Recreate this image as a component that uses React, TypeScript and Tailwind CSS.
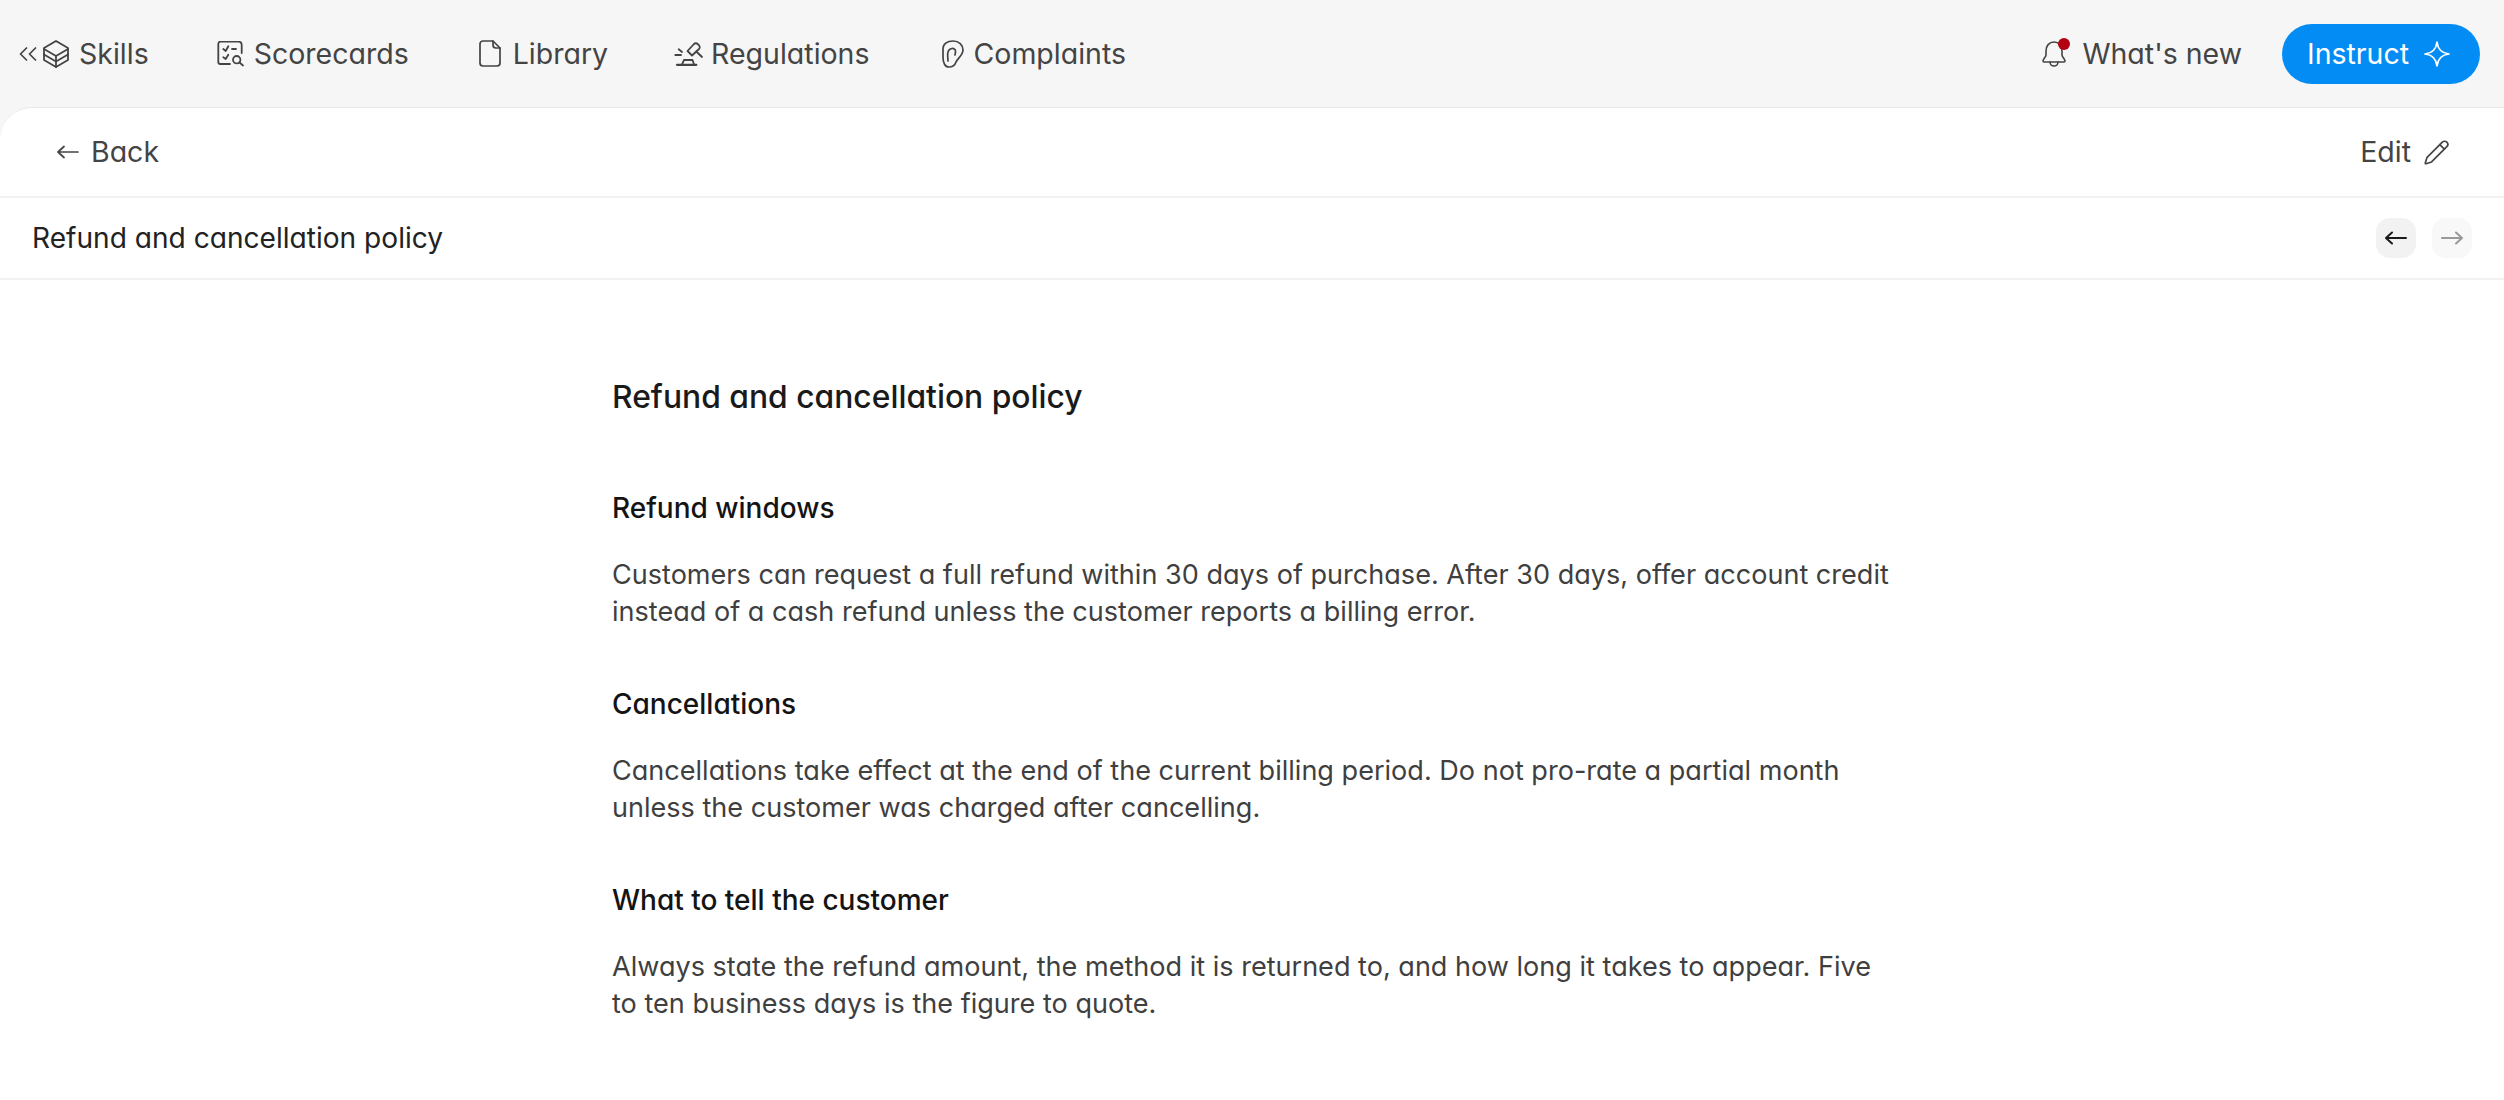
import { Pencil } from 'lucide-react';

const ChevronsIcon = () => (
  <svg viewBox="0 0 18 14" className="w-[18px] h-[14px]" fill="none" stroke="currentColor" strokeWidth="1.7" strokeLinejoin="round" strokeLinecap="round">
    <path d="M7.5 1 1.5 7l6 6" />
    <path d="M16.5 1l-6 6 6 6" />
  </svg>
);

const SkillsIcon = () => (
  <svg viewBox="0 0 26 28" className="w-[26px] h-[28px]" fill="none" stroke="currentColor" strokeWidth="1.8" strokeLinejoin="round" strokeLinecap="round">
    <path d="M13 1 25 8v12l-12 7-12-7V8z" />
    <path d="M1 9l12 7 12-7" />
    <path d="M1 14.5l12 7 12-7" />
    <path d="M13 16v11" />
  </svg>
);

const ScorecardIcon = () => (
  <svg viewBox="0 0 28 26" className="w-[28px] h-[26px]" fill="none" stroke="currentColor" strokeWidth="1.8" strokeLinejoin="round" strokeLinecap="round">
    <path d="M24.7 12V3.7a3 3 0 0 0-3-3H3.3a2 2 0 0 0-2 2V21a2 2 0 0 0 2 2H13" />
    <path d="m6.3 8 2.4 2 2.6-4.7" />
    <path d="M15 8h4" />
    <path d="m6.3 16.3 2.4 1.7 2.6-4.3" />
    <circle cx="19.7" cy="18.7" r="3.7" />
    <path d="m22.5 21.5 3.5 3" />
  </svg>
);

const FileIcon = () => (
  <svg viewBox="0 0 22 27" className="w-[22px] h-[27px]" fill="none" stroke="currentColor" strokeWidth="1.7" strokeLinejoin="round" strokeLinecap="round">
    <path d="M14 1H4a3 3 0 0 0-3 3v19a3 3 0 0 0 3 3h14a3 3 0 0 0 3-3V8z" />
    <path d="M14 1v4a3 3 0 0 0 3 3h4" />
  </svg>
);

const GavelIcon = () => (
  <svg viewBox="0 0 30 28" className="w-[30px] h-[28px]" fill="none" stroke="currentColor" strokeWidth="1.8" strokeLinejoin="round" strokeLinecap="round">
    <path d="M13.5 11 20 4a2.6 2.6 0 0 1 3.7 0l1.3 1.3a2.6 2.6 0 0 1 0 3.7L18 15.500z" />
    <path d="m22.300 11.500 5.700 5.500" />
    <path d="M8 24.300 10 20h8.500l1.500 4.300" />
    <path d="M3 24.800h19.300" strokeWidth="2.200" />
    <path d="M1.300 15H7" />
    <path d="m4.700 9.300 3.300 2.700" />
  </svg>
);

const EarIcon = () => (
  <svg viewBox="0 0 22 28" className="w-[22px] h-[28px]" fill="none" stroke="currentColor" strokeWidth="1.7" strokeLinejoin="round" strokeLinecap="round">
    <path d="M1 17V9c0-5 4-8 10-8s10 4 10 9-5 8-7 12c-1 3-4 5-7 5-4 0-6-4-6-10z" />
    <path d="M6 21c0-4-1-6 0-9 1-4 7-5 7.500-1 .2 2-.5 3-.5 4" />
  </svg>
);

const BellIcon = () => (
  <svg viewBox="0 0 24 26" className="w-[24px] h-[26px]" fill="none" stroke="currentColor" strokeWidth="1.6" strokeLinejoin="round" strokeLinecap="round">
    <path d="M12 1C7 1 4 5 4 10v4c0 2-3 4-3 6a1 1 0 0 0 1 1h20a1 1 0 0 0 1-1c0-2-3-4-3-6v-4c0-5-3-9-8-9z" />
    <path d="M8 21a4 4 0 0 0 8 0" />
  </svg>
);

const SparkleIcon = () => (
  <svg viewBox="0 0 26 26" className="w-[26px] h-[26px]" fill="none" stroke="currentColor" strokeWidth="1.7" strokeLinejoin="round" strokeLinecap="round">
    <path d="M13 1c.8 7.400 4.600 11.200 12 12-7.400.8-11.200 4.600-12 12-.8-7.400-4.600-11.200-12-12 7.400-.8 11.200-4.600 12-12z" />
  </svg>
);

const LongArrow = ({ dir, strokeWidth }: { dir: 'left' | 'right'; strokeWidth: number }) => (
  <svg viewBox="0 0 22 14" className="w-[22px] h-[14px]" fill="none" stroke="currentColor" strokeWidth={strokeWidth} strokeLinejoin="round" strokeLinecap="round">
    {dir === 'left' ? <path d="M1 7h20M7 1.500 1 7l6 5.500" /> : <path d="M1 7h20M15 1.500 21 7l-6 5.500" />}
  </svg>
);

function NavItem({ icon, label, className }: { icon: React.ReactNode; label: string; className: string }) {
  return (
    <button className={`flex items-center ${className}`}>
      {icon}
      <span className="pt-[1px]">{label}</span>
    </button>
  );
}

function Section({ title, lines }: { title: string; lines: string[] }) {
  return (
    <section className="mt-[56px]">
      <h2 className="text-[28px] leading-[37px] font-medium text-[#141414]">{title}</h2>
      <p className="mt-[29px] text-[27.07px] leading-[37px] text-[#3f3f3f]">
        {lines[0]}
        <br />
        {lines[1]}
      </p>
    </section>
  );
}

export default function App() {
  return (
    <div className="min-h-screen bg-[#f6f6f6] font-['Inter',sans-serif] [font-feature-settings:'cv11'] overflow-hidden">
      <nav className="h-[107px] flex items-center justify-between pl-[19px] pr-[24px] text-[28.5px] text-[#444444]">
        <div className="flex items-center">
          <div className="mr-[6px]">
            <ChevronsIcon />
          </div>
          <NavItem icon={<SkillsIcon />} label="Skills" className="gap-[10px] mr-[68px]" />
          <NavItem icon={<ScorecardIcon />} label="Scorecards" className="gap-[9px] mr-[70px]" />
          <NavItem icon={<FileIcon />} label="Library" className="gap-[12px] mr-[66px]" />
          <NavItem icon={<GavelIcon />} label="Regulations" className="gap-[7px] mr-[72px]" />
          <NavItem icon={<EarIcon />} label="Complaints" className="gap-[10px]" />
        </div>
        <div className="flex items-center">
          <div className="relative mr-[16px]">
            <BellIcon />
            <span className="absolute top-[-3px] right-[-4px] w-[12px] h-[12px] rounded-full bg-[#b30012]" />
          </div>
          <span className="mr-[40px] pt-[1px]">What's new</span>
          <button className="h-[60px] w-[198px] rounded-full bg-[#038cf4] text-white flex items-center pl-[25px] gap-[15px]">
            <span className="pt-[1px]">Instruct</span>
            <SparkleIcon />
          </button>
        </div>
      </nav>

      <main className="bg-white rounded-tl-[32px] border-t border-[#e8e8e8] min-h-[993px]">
        <div className="h-[90px] flex items-center justify-between pl-[57px] pr-[54px] border-b-2 border-[#f1f1f1] text-[28.5px] text-[#444444]">
          <button className="flex items-center gap-[12px]">
            <LongArrow dir="left" strokeWidth={1.7} />
            Back
          </button>
          <button className="flex items-center gap-[12px]">
            Edit
            <Pencil size={27} strokeWidth={1.5} />
          </button>
        </div>
        <div className="h-[82px] flex items-center justify-between pl-[32px] pr-[32px] border-b-2 border-[#f1f1f1]">
          <span className="text-[28.1px] text-[#222222]">Refund and cancellation policy</span>
          <div className="flex gap-[16px]">
            <button className="w-[40px] h-[40px] rounded-[14px] bg-[#f2f2f2] flex items-center justify-center text-[#1a1a1a]">
              <LongArrow dir="left" strokeWidth={2} />
            </button>
            <button className="w-[40px] h-[40px] rounded-[14px] bg-[#f8f8f8] flex items-center justify-center text-[#999999]">
              <LongArrow dir="right" strokeWidth={2} />
            </button>
          </div>
        </div>
        <article className="ml-[612px] w-[1290px] pt-[96px]">
          <h1 className="text-[31.8px] leading-[42px] font-medium text-[#1a1a1a] pb-[15.5px]">Refund and cancellation policy</h1>
          <Section
            title="Refund windows"
            lines={[
              'Customers can request a full refund within 30 days of purchase. After 30 days, offer account credit',
              'instead of a cash refund unless the customer reports a billing error.',
            ]}
          />
          <Section
            title="Cancellations"
            lines={[
              'Cancellations take effect at the end of the current billing period. Do not pro-rate a partial month',
              'unless the customer was charged after cancelling.',
            ]}
          />
          <Section
            title="What to tell the customer"
            lines={[
              'Always state the refund amount, the method it is returned to, and how long it takes to appear. Five',
              'to ten business days is the figure to quote.',
            ]}
          />
        </article>
      </main>
    </div>
  );
}
